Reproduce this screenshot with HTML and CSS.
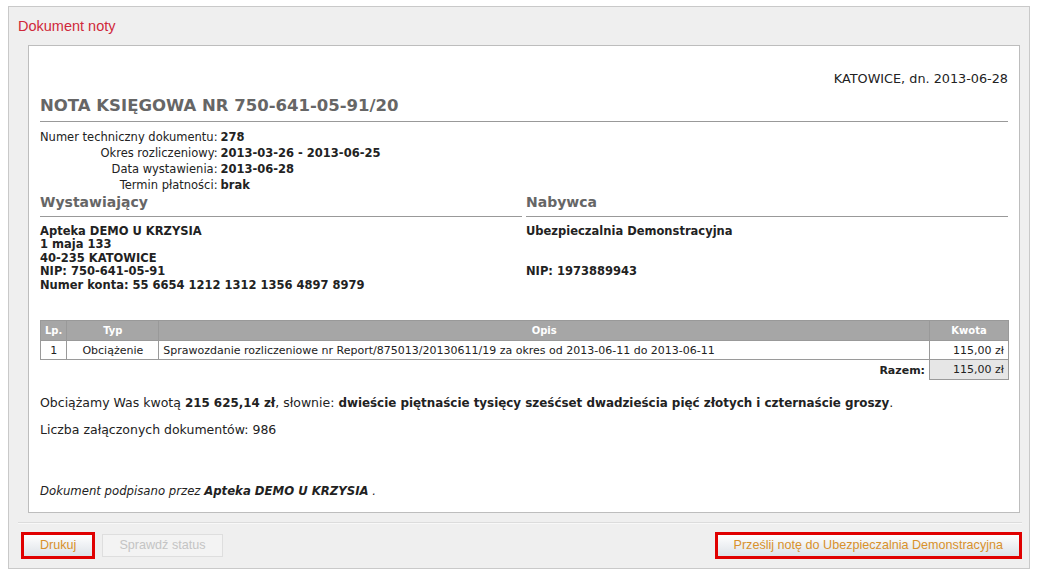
FILE: index.html
```html
<!DOCTYPE html>
<html lang="pl">
<head>
<meta charset="utf-8">
<title>Dokument noty</title>
<link rel="stylesheet" href="styles.css">
</head>
<body>
<div class="panel">
  <div class="panel-title">Dokument noty</div>
  <div class="doc">
    <div class="place">KATOWICE, dn. 2013-06-28</div>
    <h1 class="title">NOTA KSIĘGOWA NR 750-641-05-91/20</h1>
    <div class="meta">
      <span class="meta-label">Numer techniczny dokumentu:</span><span class="meta-value">278</span>
      <span class="meta-label">Okres rozliczeniowy:</span><span class="meta-value">2013-03-26 - 2013-06-25</span>
      <span class="meta-label">Data wystawienia:</span><span class="meta-value">2013-06-28</span>
      <span class="meta-label">Termin płatności:</span><span class="meta-value">brak</span>
    </div>
    <div class="parties">
      <div class="party">
        <h2 class="party-head">Wystawiający</h2>
        <div class="party-body">Apteka DEMO U KRZYSIA<br>1 maja 133<br>40-235 KATOWICE<br>NIP: 750-641-05-91<br>Numer konta: 55 6654 1212 1312 1356 4897 8979</div>
      </div>
      <div class="party">
        <h2 class="party-head">Nabywca</h2>
        <div class="party-body">Ubezpieczalnia Demonstracyjna<br><br><br>NIP: 1973889943</div>
      </div>
    </div>
    <table class="items">
      <colgroup>
        <col class="col-lp">
        <col class="col-typ">
        <col>
        <col class="col-kwota">
      </colgroup>
      <thead>
        <tr>
          <th class="th-lp">Lp.</th>
          <th>Typ</th>
          <th>Opis</th>
          <th>Kwota</th>
        </tr>
      </thead>
      <tbody>
        <tr>
          <td class="c-center">1</td>
          <td class="c-center">Obciążenie</td>
          <td>Sprawozdanie rozliczeniowe nr Report/875013/20130611/19 za okres od 2013-06-11 do 2013-06-11</td>
          <td class="c-right">115,00 zł</td>
        </tr>
        <tr class="sum-row">
          <td class="sum-label" colspan="3">Razem:</td>
          <td class="sum-value">115,00 zł</td>
        </tr>
      </tbody>
    </table>
    <p class="amount">Obciążamy Was kwotą <b>215 625,14 zł</b>, słownie: <b>dwieście piętnaście tysięcy sześćset dwadzieścia pięć złotych i czternaście groszy</b>.</p>
    <p class="attach">Liczba załączonych dokumentów: 986</p>
    <p class="signed">Dokument podpisano przez <b>Apteka DEMO U KRZYSIA</b> .</p>
  </div>
  <div class="actions">
    <div class="actions-left">
      <button class="btn btn-marked" type="button">Drukuj</button>
      <button class="btn btn-disabled" type="button" disabled>Sprawdź status</button>
    </div>
    <button class="btn btn-marked" type="button">Prześlij notę do Ubezpieczalnia Demonstracyjna</button>
  </div>
</div>
</body>
</html>
```
FILE: styles.css
```css
body {
  margin: 0;
  background: #fff;
  font-family: "DejaVu Sans", Verdana, sans-serif;
  color: #222;
}

.panel {
  margin: 6px 0 0 8px;
  width: 1020px;
  border: 1px solid #c9c9c9;
  background: #efefef;
}

.panel-title {
  font: 14.5px/18px "Liberation Sans", Arial, sans-serif;
  color: #d0283a;
  padding: 10px 0 0 9px;
}

.doc {
  margin: 10px 9px 0 19px;
  background: #fff;
  border: 1px solid #bdbdbd;
  padding: 25px 11px 13px 11px;
}

.place {
  text-align: right;
  font-size: 12.8px;
  line-height: 15px;
}

.title {
  margin: 9px 0 0;
  font-size: 16.5px;
  line-height: 22px;
  font-weight: bold;
  color: #666;
  padding-bottom: 4px;
  border-bottom: 1px solid #999;
}

.meta {
  display: grid;
  grid-template-columns: max-content 1fr;
  column-gap: 3px;
  margin-top: 7px;
  font-size: 11.5px;
  line-height: 16px;
}

.meta-label {
  text-align: right;
  white-space: nowrap;
}

.meta-value {
  font-weight: bold;
  white-space: nowrap;
}

.parties {
  display: grid;
  grid-template-columns: 1fr 1fr;
  column-gap: 4px;
}

.party-head {
  margin: 0;
  font-size: 14px;
  line-height: 18px;
  color: #666;
  font-weight: bold;
  padding-bottom: 5px;
  border-bottom: 1px solid #999;
}

.party-body {
  margin-top: 8px;
  font-size: 11.5px;
  line-height: 13.4px;
  font-weight: bold;
}

.items {
  margin-top: 28px;
  width: calc(100% + 1px);
  border-collapse: collapse;
  font-size: 11px;
}

.col-lp { width: 26px; }
.col-typ { width: 92px; }
.col-kwota { width: 79px; }

.items th {
  background: #a6a6a6;
  color: #fff;
  font-size: 10px;
  font-weight: bold;
  height: 18.7px;
  padding: 0 4px;
  border: 1px solid #999;
}

.items .th-lp {
  text-align: left;
}

.items td {
  border: 1px solid #9a9a9a;
  height: 18.7px;
  padding: 0 4px;
}

.items .c-center { text-align: center; }
.items .c-right { text-align: right; }

.items .sum-label {
  border: none;
  text-align: right;
  font-weight: bold;
}

.items .sum-value {
  background: #e6e6e6;
  text-align: right;
}

.amount {
  margin: 15px 0 0;
  font-size: 12.5px;
  line-height: 16px;
}

.amount b {
  font-size: 11.9px;
}

.attach {
  margin: 11px 0 0;
  font-size: 12.5px;
  line-height: 16px;
}

.signed {
  margin: 45px 0 0;
  font-size: 11.7px;
  line-height: 16px;
  font-style: italic;
}

.actions {
  margin: 9px 7px 0 9px;
  border-top: 1px solid #dcdcdc;
  box-shadow: inset 0 1px 0 #f8f8f8;
  padding: 9px 0 9px 3px;
  display: flex;
  justify-content: space-between;
  align-items: center;
}

.actions-left {
  display: flex;
  align-items: center;
  gap: 7px;
}

.btn {
  font: 12.6px/1 "Liberation Sans", Arial, sans-serif;
  color: #d8912b;
  background: linear-gradient(#ffffff, #dde2e8);
  border: 1px solid #c8c8c8;
  height: 23px;
  padding: 0 15px;
  margin: 0;
}

.btn-marked {
  border: 3px solid #e00000;
  height: 27px;
  padding: 0 16px;
}

.btn-disabled {
  color: #c4c4c4;
  background: #f3f3f3;
  border-color: #dedede;
  padding: 0 16px;
}
```
